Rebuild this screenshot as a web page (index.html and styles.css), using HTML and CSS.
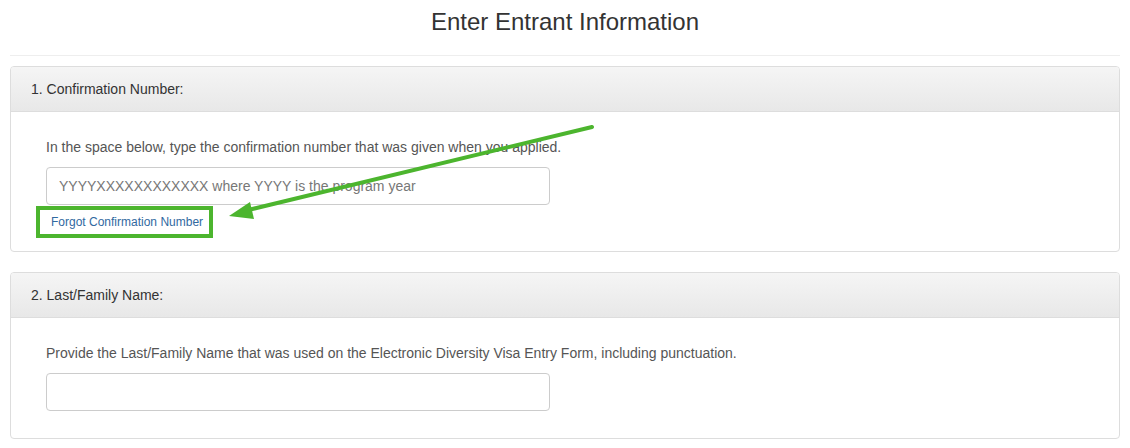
FILE: index.html
```html
<!DOCTYPE html>
<html lang="en">
<head>
<meta charset="utf-8">
<title>Enter Entrant Information</title>
<link rel="stylesheet" href="styles.css">
</head>
<body>
<div class="page">
  <h1 class="title">Enter Entrant Information</h1>
  <div class="panel">
    <div class="panel-heading">1. Confirmation Number:</div>
    <div class="panel-body">
      <p class="help">In the space below, type the confirmation number that was given when you applied.</p>
      <input class="field" type="text" placeholder="YYYYXXXXXXXXXXXX where YYYY is the program year">
      <div class="link-row"><a class="forgot" href="#">Forgot Confirmation Number</a></div>
    </div>
  </div>
  <div class="panel panel-2">
    <div class="panel-heading">2. Last/Family Name:</div>
    <div class="panel-body body-2">
      <p class="help">Provide the Last/Family Name that was used on the Electronic Diversity Visa Entry Form, including punctuation.</p>
      <input class="field" type="text">
    </div>
  </div>
  <svg class="arrow" width="1130" height="448" viewBox="0 0 1130 448">
    <line x1="592" y1="127" x2="244" y2="211" stroke="#4cb52e" stroke-width="4" stroke-linecap="round"/>
    <polygon points="229,216 250,202 254,219" fill="#4cb52e"/>
  </svg>
</div>
</body>
</html>
```
FILE: styles.css
```css
* { box-sizing: border-box; }
html, body { margin: 0; padding: 0; background: #fff; }
body {
  font-family: "Liberation Sans", Arial, sans-serif;
  font-size: 14px;
  color: #333;
}
.page {
  position: relative;
  padding: 0 10px;
  width: 1130px;
  height: 448px;
  overflow: hidden;
}
.title {
  margin: 0 0 10px;
  padding: 9px 0 20px;
  font-size: 24px;
  font-weight: normal;
  line-height: 26px;
  text-align: center;
  color: #333;
  border-bottom: 1px solid #eee;
}
.panel {
  border: 1px solid #ddd;
  border-radius: 4px;
  background: #fff;
}
.panel-2 { margin-top: 20px; }
.panel-heading {
  height: 45px;
  padding: 0 20px;
  display: flex;
  align-items: center;
  background: linear-gradient(to bottom, #f5f5f5 0%, #e8e8e8 100%);
  border-bottom: 1px solid #ddd;
  border-radius: 3px 3px 0 0;
  font-size: 14px;
  color: #333;
}
.panel-body {
  padding: 25px 35px 13px;
}
.body-2 { padding-bottom: 27px; }
.help {
  margin: 0 0 10px;
  line-height: 20px;
  color: #555;
}
.field {
  display: block;
  width: 504px;
  height: 38px;
  padding: 6px 12px;
  border: 1px solid #ccc;
  border-radius: 4px;
  font-family: "Liberation Sans", Arial, sans-serif;
  font-size: 14px;
  color: #555;
  background: #fff;
}
.field::placeholder { color: #777; }
.link-row {
  margin: 1px 0 0 -10px;
}
.forgot {
  display: inline-block;
  width: 177px;
  height: 32px;
  line-height: 24px;
  padding: 0 0 0 11px;
  border: 4px solid #4cb52e;
  font-size: 12px;
  color: #31699f;
  text-decoration: none;
}
.arrow {
  position: absolute;
  left: 0;
  top: 0;
  pointer-events: none;
}
```
